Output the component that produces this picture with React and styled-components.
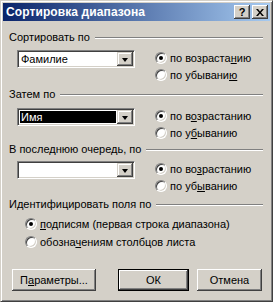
import React from "react";
import styled, { createGlobalStyle } from "styled-components";

const Global = createGlobalStyle`
  html, body { margin: 0; padding: 0; background: #d4d0c8; }
  body { font-family: "Liberation Sans", Arial, sans-serif; font-size: 11px; color: #000; }
`;

const Window = styled.div`
  box-sizing: border-box;
  width: 273px;
  height: 302px;
  background: #d4d0c8;
  border: 1px solid;
  border-color: #d4d0c8 #404040 #404040 #d4d0c8;
  box-shadow: inset 1px 1px #fff, inset -1px -1px #808080;
  padding: 2px;
  display: flex;
  flex-direction: column;
`;

const TitleBar = styled.div`
  height: 18px;
  background: linear-gradient(to right, #0a246a, #a6caf0);
  display: flex;
  align-items: center;
  padding: 0 2px 0 2px;
`;

const Title = styled.div`
  flex: 1;
  color: #fff;
  font-weight: bold;
  font-size: 12px;
  padding-left: 1px;
  letter-spacing: 0.1px;
`;

const CaptionButton = styled.div`
  box-sizing: border-box;
  width: 16px;
  height: 14px;
  margin-left: ${(p) => p.$gap || 0}px;
  background: #d4d0c8;
  box-shadow: inset -1px -1px #404040, inset 1px 1px #fff, inset -2px -2px #808080;
  display: flex;
  align-items: center;
  justify-content: center;
  font-weight: bold;
  font-size: 11px;
  line-height: 1;
`;

const Body = styled.div`
  flex: 1;
  display: flex;
  flex-direction: column;
  padding: 10px 7px 0 6px;
`;

const Section = styled.div`
  height: ${(p) => p.$h}px;
  display: flex;
  flex-direction: column;
`;

const GroupHeader = styled.div`
  height: 13px;
  display: flex;
  align-items: center;
  gap: 5px;
  line-height: 13px;
  white-space: nowrap;
`;

const Rule = styled.div`
  flex: 1;
  height: 0;
  border-top: 1px solid #808080;
  border-bottom: 1px solid #fff;
`;

const SortRow = styled.div`
  display: flex;
  align-items: flex-start;
  margin-top: ${(p) => p.$top}px;
  padding-left: 8px;
`;

const Combo = styled.div`
  box-sizing: border-box;
  width: 118px;
  height: 18px;
  margin-top: 1px;
  border: 1px solid;
  border-color: #808080 #fff #fff #808080;
  box-shadow: inset 1px 1px #404040, inset -1px -1px #d4d0c8;
  background: #fff;
  padding: 1px;
  display: flex;
`;

const ComboText = styled.div`
  flex: 1;
  margin: 1px 1px 1px 1px;
  padding-left: 1px;
  line-height: 12px;
  background: ${(p) => (p.$selected ? "#000" : "transparent")};
  color: ${(p) => (p.$selected ? "#fff" : "#000")};
`;

const DropButton = styled.div`
  box-sizing: border-box;
  width: 16px;
  height: 14px;
  background: #d4d0c8;
  box-shadow: inset -1px -1px #404040, inset 1px 1px #d4d0c8, inset -2px -2px #808080, inset 2px 2px #fff;
  display: flex;
  align-items: center;
  justify-content: center;
`;

const Arrow = styled.div`
  width: 0;
  height: 0;
  border-left: 3.5px solid transparent;
  border-right: 3.5px solid transparent;
  border-top: 4px solid #000;
  margin-top: 1px;
`;

const RadioGroup = styled.div`
  display: flex;
  flex-direction: column;
  margin-left: ${(p) => p.$left || 0}px;
`;

const RadioRow = styled.div`
  height: ${(p) => p.$h || 17}px;
  display: flex;
  align-items: center;
  gap: 3px;
  white-space: nowrap;
`;

const RadioCircle = styled.div`
  box-sizing: border-box;
  width: 12px;
  height: 12px;
  border-radius: 50%;
  border: 1px solid;
  border-color: #808080 #fff #fff #808080;
  box-shadow: inset 1px 1px #404040, inset -1px -1px #d4d0c8;
  background: #fff;
  display: flex;
  align-items: center;
  justify-content: center;
  flex: none;
`;

const Dot = styled.div`
  width: 4px;
  height: 4px;
  border-radius: 50%;
  background: #000;
`;

const U = styled.span`
  text-decoration: underline;
  text-underline-offset: 1px;
`;

const IdentGroup = styled(RadioGroup)`
  margin-top: 4px;
  padding-left: 16px;
`;

const ButtonBar = styled.div`
  display: flex;
  margin-top: auto;
  margin-bottom: 8px;
  padding-left: 3px;
`;

const Button = styled.div`
  box-sizing: border-box;
  width: ${(p) => p.$w}px;
  height: 22px;
  margin-left: ${(p) => p.$ml || 0}px;
  background: #d4d0c8;
  display: flex;
  align-items: center;
  justify-content: center;
  box-shadow: ${(p) =>
    p.$default
      ? "inset 0 0 0 1px #000, inset -2px -2px #404040, inset 2px 2px #fff, inset -3px -3px #808080"
      : "inset -1px -1px #404040, inset 1px 1px #fff, inset -2px -2px #808080"};
`;

function Radio({ checked, children, h }) {
  return (
    <RadioRow $h={h}>
      <RadioCircle>{checked && <Dot />}</RadioCircle>
      <span>{children}</span>
    </RadioRow>
  );
}

function SortBlock({ label, value, selected, asc, desc, top, h }) {
  return (
    <Section $h={h}>
      <GroupHeader>
        {label}
        <Rule />
      </GroupHeader>
      <SortRow $top={top}>
        <Combo>
          <ComboText $selected={selected}>{value}</ComboText>
          <DropButton>
            <Arrow />
          </DropButton>
        </Combo>
        <RadioGroup $left={20}>
          <Radio checked>{asc}</Radio>
          <Radio>{desc}</Radio>
        </RadioGroup>
      </SortRow>
    </Section>
  );
}

export default function App() {
  return (
    <>
      <Global />
      <Window>
        <TitleBar>
          <Title>Сортировка диапазона</Title>
          <CaptionButton>?</CaptionButton>
          <CaptionButton $gap={2}>
            <svg width="8" height="7" viewBox="0 0 8 7">
              <path d="M0 0h2l2 2.5L6 0h2L5 3.5 8 7H6L4 4.5 2 7H0l3-3.5z" fill="#000" />
            </svg>
          </CaptionButton>
        </TitleBar>
        <Body>
          <SortBlock
            h={57}
            top={5}
            label="Сортировать по"
            value="Фамилие"
            asc={<>по возраста<U>н</U>ию</>}
            desc={<>по убывани<U>ю</U></>}
          />
          <SortBlock
            h={55}
            top={6}
            label="Затем по"
            value="Имя"
            selected
            asc={<>по в<U>о</U>зрастанию</>}
            desc={<>по у<U>б</U>ыванию</>}
          />
          <SortBlock
            h={55}
            top={4}
            label="В последнюю очередь, по"
            value=""
            asc={<>по во<U>з</U>растанию</>}
            desc={<>по уб<U>ы</U>ванию</>}
          />
          <Section $h={56}>
            <GroupHeader>
              Идентифицировать поля по
              <Rule />
            </GroupHeader>
            <IdentGroup>
              <Radio checked h={18}>
                <U>п</U>одписям (первая строка диапазона)
              </Radio>
              <Radio h={18}>
                обозна<U>ч</U>ениям столбцов листа
              </Radio>
            </IdentGroup>
          </Section>
          <ButtonBar>
            <Button $w={84}>
              П<U>а</U>раметры...
            </Button>
            <Button $w={71} $ml={22} $default>
              ОК
            </Button>
            <Button $w={65} $ml={8}>
              Отмена
            </Button>
          </ButtonBar>
        </Body>
      </Window>
    </>
  );
}
